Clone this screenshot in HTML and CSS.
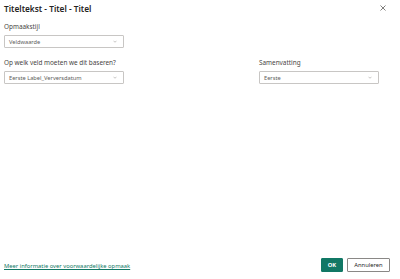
FILE: index.html
```html
<!DOCTYPE html>
<html lang="nl">
<head>
<meta charset="utf-8">
<title>Titeltekst</title>
<link rel="stylesheet" href="styles.css">
</head>
<body>
<div class="dialog">
  <div class="header">
    <h1 class="title">Titeltekst - Titel - Titel</h1>
    <button class="close" aria-label="Sluiten">
      <svg width="6" height="6" viewBox="0 0 6 6"><path d="M0.5 0.5 L5.5 5.5 M5.5 0.5 L0.5 5.5" stroke="#605e5c" stroke-width="0.8" fill="none"/></svg>
    </button>
  </div>
  <div class="field first">
    <div class="label">Opmaakstijl</div>
    <div class="select"><span>Veldwaarde</span><svg class="chev" width="4" height="3" viewBox="0 0 4 3"><path d="M0.5 0.75 L2 2.25 L3.5 0.75" stroke="#a19f9d" stroke-width="0.6" fill="none"/></svg></div>
  </div>
  <div class="row">
    <div class="field">
      <div class="label">Op welk veld moeten we dit baseren?</div>
      <div class="select"><span>Eerste Label_Verversdatum</span><svg class="chev" width="4" height="3" viewBox="0 0 4 3"><path d="M0.5 0.75 L2 2.25 L3.5 0.75" stroke="#a19f9d" stroke-width="0.6" fill="none"/></svg></div>
    </div>
    <div class="field">
      <div class="label">Samenvatting</div>
      <div class="select"><span>Eerste</span><svg class="chev" width="4" height="3" viewBox="0 0 4 3"><path d="M0.5 0.75 L2 2.25 L3.5 0.75" stroke="#a19f9d" stroke-width="0.6" fill="none"/></svg></div>
    </div>
  </div>
  <div class="footer">
    <a class="link" href="#">Meer informatie over voorwaardelijke opmaak</a>
    <div class="buttons">
      <button class="btn primary">OK</button>
      <button class="btn">Annuleren</button>
    </div>
  </div>
</div>
</body>
</html>
```
FILE: styles.css
```css
html, body {
  margin: 0;
  padding: 0;
  background: #ffffff;
}
body {
  font-family: "Noto Sans", "Open Sans", sans-serif;
  color: #252423;
}
.dialog {
  box-sizing: border-box;
  width: 400px;
  height: 279px;
  padding: 3px 10px 7px 4px;
  display: flex;
  flex-direction: column;
}
.header {
  display: flex;
  justify-content: space-between;
  align-items: center;
  height: 12px;
}
.title {
  margin: 0;
  font-size: 8.3px;
  font-weight: 600;
  color: #252423;
  line-height: 12px;
}
.close {
  border: none;
  background: none;
  padding: 0;
  width: 8px;
  height: 8px;
  display: flex;
  align-items: center;
  justify-content: center;
  margin-top: -3px;
  margin-right: 3px;
}
.field {
  display: flex;
  flex-direction: column;
}
.field.first {
  margin-top: 7px;
}
.label {
  font-size: 6.4px;
  line-height: 9px;
  color: #484644;
  margin-bottom: 4px;
}
.select {
  box-sizing: border-box;
  width: 120px;
  height: 13px;
  border: 1px solid #c8c6c4;
  border-radius: 1px;
  display: flex;
  align-items: center;
  justify-content: space-between;
  padding: 0 6px 0 4px;
  font-size: 5.7px;
  color: #605e5c;
}
.chev {
  display: block;
}
.row {
  display: grid;
  grid-template-columns: 255px 120px;
  margin-top: 10px;
}
.footer {
  margin-top: auto;
  display: flex;
  justify-content: space-between;
  align-items: center;
}
.link {
  font-size: 5.8px;
  color: #117865;
  text-decoration: underline;
  padding-top: 2px;
}
.buttons {
  display: flex;
  gap: 4px;
}
.btn {
  box-sizing: border-box;
  height: 14px;
  border: 1px solid #8a8886;
  border-radius: 1px;
  background: #ffffff;
  color: #252423;
  font-family: "Noto Sans", "Open Sans", sans-serif;
  font-size: 5.8px;
  padding: 0 4px;
  width: 43px;
}
.btn.primary {
  width: 22px;
  background: #117865;
  border-color: #117865;
  color: #ffffff;
  font-weight: 700;
}
```
